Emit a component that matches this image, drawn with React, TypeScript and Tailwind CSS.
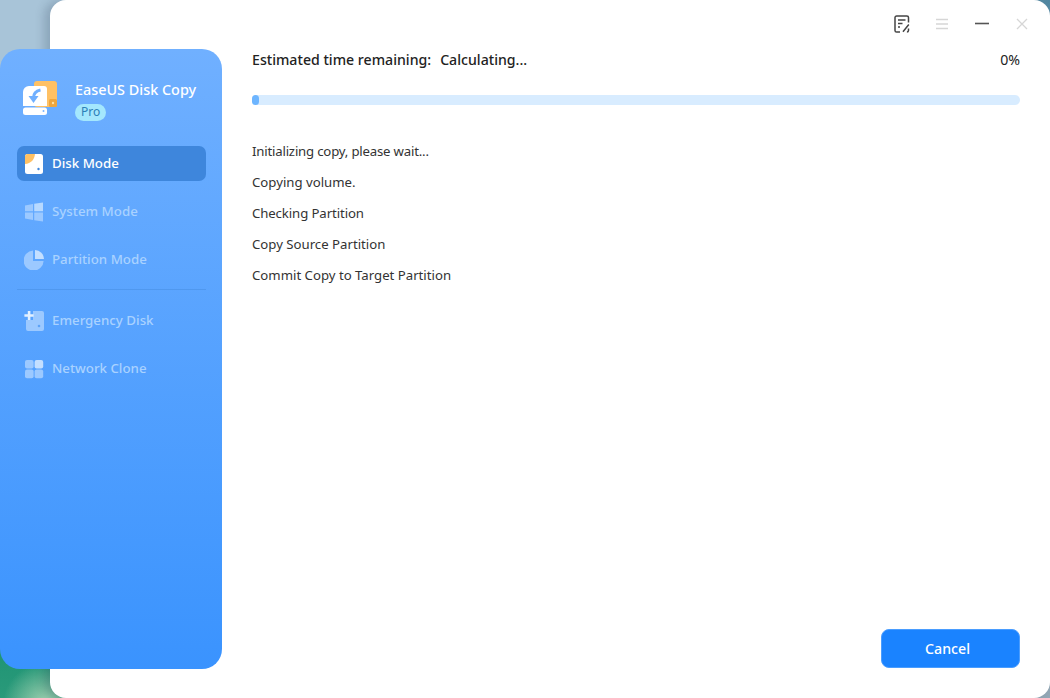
import React from "react";

function Item({ icon, label, active }: { icon: React.ReactNode; label: string; active?: boolean }) {
  return (
    <div className={active ? "flex h-[35px] items-center gap-[8px] rounded-[7px] bg-[#3e86dc] px-[7.5px] text-white" : "flex h-[35px] items-center gap-[8px] rounded-[7px] px-[7.5px] text-[#a9d2ff]"}>
      <span className="flex h-[20px] w-[20px] items-center justify-center">{icon}</span>
      <span className="pb-[1px] text-[13.3px] leading-[20px] font-medium">{label}</span>
    </div>
  );
}

const DiskIcon = () => (
  <svg width="20" height="20" viewBox="0 0 20 20">
    <rect x="1" y="0" width="18" height="20" rx="2.5" fill="#fff" />
    <path d="M1 10V2.5A2.5 2.5 0 0 1 3.5 0H11C10.5 5.5 7 9.5 1 10Z" fill="#ffc164" />
    <circle cx="14.5" cy="15" r="1.2" fill="#3e86dc" />
  </svg>
);
const SystemIcon = () => (
  <svg width="20" height="20" viewBox="0 0 20 20">
    <path d="M1 3.5 9 2v7.2H1Z" fill="#9cc9ff" />
    <path d="M10.2 1.8 19 .4v8.8h-8.8Z" fill="#b7d9ff" />
    <path d="M1 10.6h8v7.3l-8-1.3Z" fill="#9cc9ff" />
    <path d="M10.2 10.6H19v9l-8.8-1.4Z" fill="#9cc9ff" />
  </svg>
);
const PartitionIcon = () => (
  <svg width="20" height="20" viewBox="0 0 20 20">
    <path d="M9 .6V11h10.6A10 10 0 1 1 9 .6Z" fill="#9cc9ff" />
    <path d="M11 0a9.2 9.2 0 0 1 9 9h-9Z" fill="#c4dfff" />
  </svg>
);
const EmergencyIcon = () => (
  <svg width="20" height="20" viewBox="0 0 20 20">
    <path d="M9 0h9a2 2 0 0 1 2 2v16a2 2 0 0 1-2 2H4a2 2 0 0 1-2-2V9h7Z" fill="#9cc9ff" />
    <path d="M3.8 0h2.6v3.2h3.2v2.6H6.4V9H3.8V5.8H.4V3.2h3.4Z" fill="#e2f0ff" />
    <circle cx="15" cy="15" r="1.3" fill="#5ea3f7" />
  </svg>
);
const NetworkIcon = () => (
  <svg width="20" height="20" viewBox="0 0 20 20">
    <rect x="1" y="1" width="8.6" height="8.6" rx="2" fill="#9cc9ff" />
    <rect x="10.6" y="1" width="8.6" height="8.6" rx="2" fill="#c4dfff" />
    <rect x="1" y="10.6" width="8.6" height="8.6" rx="2" fill="#9cc9ff" />
    <rect x="10.6" y="10.6" width="8.6" height="8.6" rx="2" fill="#9cc9ff" />
  </svg>
);

const Logo = () => (
  <svg width="34" height="34" viewBox="0 0 34 34" className="shrink-0">
    <rect x="11" y="0" width="23" height="26" rx="3" fill="#ffc164" />
    <rect x="26" y="18" width="8" height="8" rx="1.5" fill="#f0a63c" />
    <circle cx="30" cy="22" r="1.2" fill="#ffe0a0" />
    <path d="M6 5h15a3 3 0 0 1 3 3v17H0V11a6 6 0 0 1 6-6Z" fill="#fff" />
    <rect x="0" y="26.5" width="24" height="7.5" rx="2.5" fill="#fff" />
    <circle cx="20.5" cy="30" r="1" fill="#7ab5ff" />
    <path d="M17.5 9C12.5 10 10.5 13 10.5 17" fill="none" stroke="#70b0ff" strokeWidth="3" />
    <path d="M5.5 15h10l-5 7Z" fill="#70b0ff" />
  </svg>
);

export default function App() {
  return (
    <div className="h-[698px] w-[1050px] overflow-hidden bg-[radial-gradient(circle_at_1050px_0px,#4f86a0_0,#6b97ae_30px,transparent_31px),radial-gradient(circle_at_1050px_698px,#94a8b6_0,#94a8b6_30px,transparent_31px),radial-gradient(circle_at_45px_705px,#a4d2b2_0,transparent_42px),linear-gradient(180deg,#a8c4d8_0%,#a8c4d8_50%,#1f9474_93%,#2a9a7a_100%)] pl-[50px] [font-family:'Noto_Sans','Open_Sans',sans-serif]">
      <div className="flex h-[698px] w-[1000px] rounded-[16px] bg-white shadow-[-6px_0_10px_rgba(40,60,80,0.22)]">
        <aside className="mt-[49px] ml-[-50px] flex h-[620px] w-[222px] shrink-0 flex-col rounded-[20px] bg-[linear-gradient(180deg,#70b0ff_0%,#3a93fe_100%)] px-[16.5px]">
          <div className="flex h-[97px] items-center gap-[18px] pl-[6.5px]">
            <Logo />
            <div className="flex flex-col items-start gap-[4px] pt-[5px]">
              <span className="text-[14.4px] leading-[20px] font-medium text-white">EaseUS Disk Copy</span>
              <span className="flex h-[17px] items-center rounded-full bg-[#a4e7fd] px-[6px] text-[12px] text-[#2d7fb8]">Pro</span>
            </div>
          </div>
          <div className="flex flex-col gap-[13px]">
            <Item active icon={<DiskIcon />} label="Disk Mode" />
            <Item icon={<SystemIcon />} label="System Mode" />
            <Item icon={<PartitionIcon />} label="Partition Mode" />
          </div>
          <div className="mt-[12px] h-px bg-[#4f98ef]" />
          <div className="mt-[13px] flex flex-col gap-[13px]">
            <Item icon={<EmergencyIcon />} label="Emergency Disk" />
            <Item icon={<NetworkIcon />} label="Network Clone" />
          </div>
        </aside>

        <main className="flex min-w-0 flex-1 flex-col pr-[30px] pl-[30px]">
          <div className="mr-[-22px] flex h-[48px] items-center justify-end">
            <span className="flex w-[40px] justify-center">
              <svg width="16" height="18" viewBox="0 0 16 18" fill="none" stroke="#444" strokeWidth="1.5">
                <path d="M6 17H2.6A1.6 1.6 0 0 1 1 15.4V2.6A1.6 1.6 0 0 1 2.6 1h10.3a1.6 1.6 0 0 1 1.6 1.6v5" />
                <path d="M4 5h7.5M4 8.5h4.5M4 12h2" />
                <path d="M9 16.8 14.8 9.5M14.5 13.5v2A1.6 1.6 0 0 1 12.9 17" />
              </svg>
            </span>
            <span className="flex w-[40px] justify-center">
              <svg width="14" height="14" viewBox="0 0 14 14" stroke="#d6d6d6" strokeWidth="1.5">
                <path d="M1 2.5h12M1 7h12M1 11.5h12" />
              </svg>
            </span>
            <span className="flex w-[40px] justify-center">
              <svg width="16" height="14" viewBox="0 0 16 14" stroke="#555" strokeWidth="1.6">
                <path d="M1 6.5h14" />
              </svg>
            </span>
            <span className="flex w-[40px] justify-center">
              <svg width="12" height="12" viewBox="0 0 12 12" stroke="#d6d6d6" strokeWidth="1.3">
                <path d="M1 1l10 10M11 1 1 11" />
              </svg>
            </span>
          </div>

          <div className="flex h-[24px] items-center justify-between text-[14.15px] font-medium text-[#222]">
            <div className="flex gap-[9px]">
              <span>Estimated time remaining:</span>
              <span>Calculating...</span>
            </div>
            <span className="font-normal">0%</span>
          </div>

          <div className="mt-[23px] h-[10px] rounded-full bg-[#d8ecff]">
            <div className="h-[10px] w-[7px] rounded-full bg-[#6db5ff]" />
          </div>

          <div className="mt-[36px] flex flex-col gap-[11px] text-[13.2px] leading-[20px] text-[#333]">
            <div className="tracking-[-0.19px]">Initializing copy, please wait...</div>
            <div>Copying volume.</div>
            <div className="tracking-[-0.1px]">Checking Partition</div>
            <div>Copy Source Partition</div>
            <div>Commit Copy to Target Partition</div>
          </div>

          <div className="mt-auto mb-[30px] flex justify-end">
            <button className="h-[39px] w-[139px] rounded-[8px] border border-[#4a9dff] bg-[#1a83ff] pr-[6px] text-[14.2px] font-medium text-white">Cancel</button>
          </div>
        </main>
      </div>
    </div>
  );
}
